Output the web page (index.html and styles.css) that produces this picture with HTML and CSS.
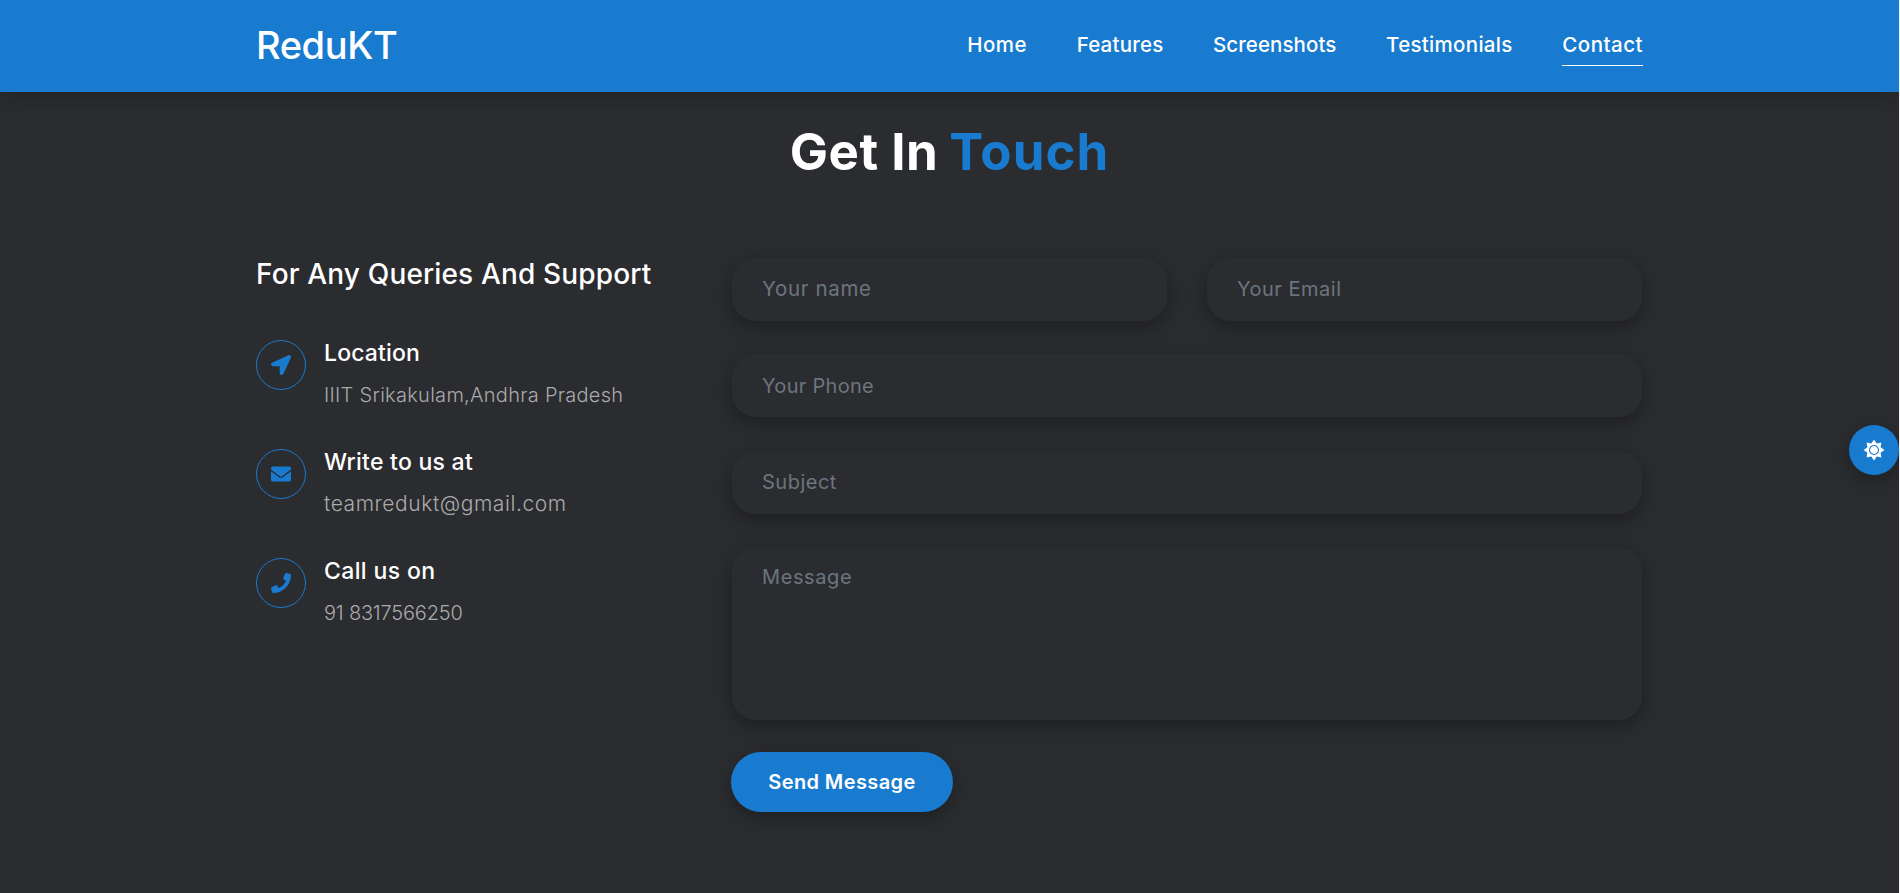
FILE: index.html
```html
<!DOCTYPE html>
<html lang="en">
<head>
<meta charset="utf-8">
<title>ReduKT</title>
<link rel="stylesheet" href="styles.css">
</head>
<body>
<header class="header">
  <div class="container header-row">
    <a class="logo">ReduKT</a>
    <nav class="nav">
      <a class="nav-link home">Home</a>
      <a class="nav-link features">Features</a>
      <a class="nav-link screenshots">Screenshots</a>
      <a class="nav-link testimonials">Testimonials</a>
      <a class="nav-link contact active">Contact</a>
    </nav>
  </div>
</header>
<main class="container">
  <h2 class="title"><span class="title-get">Get In</span><span class="title-touch">Touch</span></h2>
  <div class="columns">
    <section class="info">
      <h3 class="info-title">For Any Queries And Support</h3>
      <div class="item">
        <div class="item-icon"><svg viewBox="0 0 512 512" width="20" height="20"><path d="M444.52 3.52 28.74 195.42c-47.97 22.39-31.98 92.75 19.19 92.75h175.91v175.91c0 51.17 70.36 67.17 92.75 19.19l191.9-415.78c15.99-38.39-25.59-79.97-63.97-63.97z"/></svg></div>
        <div><h4 class="t-loc">Location</h4><p class="p-loc">IIIT Srikakulam,Andhra Pradesh</p></div>
      </div>
      <div class="item">
        <div class="item-icon"><svg viewBox="0 0 512 512" width="20" height="20"><path d="M502.3 190.8c3.9-3.1 9.7-.2 9.7 4.7V400c0 26.5-21.5 48-48 48H48c-26.5 0-48-21.500-48-48V195.600c0-5 5.700-7.800 9.700-4.700 22.400 17.400 52.100 39.500 154.100 113.600 21.100 15.400 56.700 47.800 92.200 47.600 35.700.3 72-32.800 92.300-47.600 102-74.100 131.600-96.300 154-113.700zM256 320c23.200.4 56.600-29.200 73.400-41.400 132.700-96.300 142.800-104.700 173.400-128.700 5.800-4.500 9.200-11.500 9.200-18.900v-19c0-26.500-21.500-48-48-48H48c-26.500 0-48 21.500-48 48v19c0 7.400 3.400 14.300 9.200 18.900 30.600 23.900 40.700 32.400 173.400 128.700 16.800 12.200 50.200 41.800 73.400 41.400z"/></svg></div>
        <div><h4 class="t-mail">Write to us at</h4><p class="p-mail">teamredukt@gmail.com</p></div>
      </div>
      <div class="item">
        <div class="item-icon"><svg viewBox="0 0 512 512" width="20" height="20"><path d="M493.400 24.600l-104-24c-11.300-2.600-22.900 3.300-27.500 13.900l-48 112c-4.200 9.800-1.400 21.300 6.900 28l60.600 49.600c-36 76.700-98.900 140.500-177.200 177.200l-49.600-60.600c-6.800-8.300-18.200-11.100-28-6.900l-112 48C3.900 366.500-2 378.100.6 389.400l24 104C27.100 504.200 36.700 512 48 512c256.100 0 464-207.500 464-464 0-11.200-7.700-20.900-18.600-23.400z"/></svg></div>
        <div><h4 class="t-call">Call us on</h4><p class="p-call">91 8317566250</p></div>
      </div>
    </section>
    <form class="form">
      <input class="field f-name" placeholder="Your name">
      <input class="field f-email" placeholder="Your Email">
      <input class="field wide f-phone" placeholder="Your Phone">
      <input class="field wide f-subject" placeholder="Subject">
      <textarea class="field wide area" placeholder="Message"></textarea>
      <button class="send" type="button">Send Message</button>
    </form>
  </div>
</main>
<button class="theme" type="button" aria-label="Toggle theme">
  <svg viewBox="-12 -12 24 24" width="24" height="24">
    <path d="M0-10.500 2.700-6.600 7.400-7.400 6.600-2.700 10.500 0 6.600 2.700 7.400 7.400 2.700 6.600 0 10.500-2.700 6.600-7.400 7.400-6.600 2.700-10.500 0-6.600-2.700-7.400-7.400-2.700-6.600z" fill="#fff"/>
    <circle r="4.500" fill="#fff" stroke="#187bcf" stroke-width="1.100"/>
  </svg>
</button>
</body>
</html>
```
FILE: styles.css
```css
* { box-sizing: border-box; margin: 0; padding: 0; }
body {
  height: 893px;
  overflow: hidden;
  border-right: 1px solid #f1f1f1;
  background: #2b2c30;
  color: #fff;
  font-family: Inter, "Liberation Sans", sans-serif;
}
.container { width: 1387px; margin: 0 auto; }
.header {
  position: relative;
  height: 92px;
  background: #187bcf;
  box-shadow: 0 6px 20px rgba(0, 0, 0, .2);
}
.header-row { display: flex; align-items: center; justify-content: space-between; height: 90px; }
.logo { font-size: 38px; font-weight: 500; letter-spacing: -.4px; white-space: nowrap; }
.nav { display: flex; gap: 49.6px; }
.nav-link {
  padding: 8px 0;
  border-bottom: 1px solid transparent;
  font-size: 20.5px;
  font-weight: 500;
  line-height: 24px;
  white-space: nowrap;
}
.home, .contact { letter-spacing: .5px; }
.features { letter-spacing: .2px; }
.screenshots { letter-spacing: .08px; }
.testimonials { letter-spacing: .3px; }
.active { border-color: #fff; }
.title {
  display: flex;
  justify-content: center;
  gap: 11px;
  padding-top: 29px;
  font-size: 51px;
  font-weight: 700;
  line-height: 62px;
}
.title-get { letter-spacing: .5px; }
.title-touch { color: #187bcf; letter-spacing: 1px; }
.columns { display: flex; justify-content: space-between; padding-top: 74px; }
.info { width: 416px; }
.info-title {
  padding-top: 1px;
  margin-bottom: 50px;
  font-size: 28px;
  font-weight: 500;
  line-height: 32px;
  letter-spacing: .15px;
  white-space: nowrap;
}
.item { display: flex; gap: 18px; height: 109px; }
.item-icon {
  display: flex;
  align-items: center;
  justify-content: center;
  width: 50px;
  height: 50px;
  border: 1px solid #187bcf;
  border-radius: 50%;
  fill: #187bcf;
}
.item h4 { font-size: 23px; font-weight: 500; line-height: 26px; margin-bottom: 16px; white-space: nowrap; }
.item p { color: #aaa; font-size: 20px; font-weight: 300; line-height: 26px; white-space: nowrap; }
.t-loc { letter-spacing: .15px; }
.t-mail { letter-spacing: .26px; }
.t-call { letter-spacing: .36px; }
.p-loc { letter-spacing: .29px; }
.item .p-mail { font-size: 21px; letter-spacing: .57px; }
.p-call { letter-spacing: -.2px; }
.form {
  display: grid;
  grid-template-columns: 437px 437px;
  column-gap: 38px;
  row-gap: 31.3px;
  align-content: start;
  width: 912px;
}
.field {
  width: 100%;
  height: 65px;
  padding: 0 30px 2px;
  border: 1px solid transparent;
  border-radius: 25px;
  background: #2b2c30;
  background-clip: padding-box;
  box-shadow: 0 6px 20px rgba(0, 0, 0, .3);
  color: #fff;
  font: 400 20px Inter, "Liberation Sans", sans-serif;
  outline: 0;
  resize: none;
}
.field::placeholder { color: #6c757d; opacity: 1; }
.f-name { font-size: 20.5px; letter-spacing: .65px; }
.f-email { letter-spacing: .5px; }
.f-phone { padding-bottom: 0; letter-spacing: .3px; }
.f-subject { padding-bottom: 0; letter-spacing: .5px; }
.wide { grid-column: 1 / 3; }
.area { height: 175px; padding-top: 18px; letter-spacing: .6px; }
.send {
  width: 222px;
  height: 60px;
  border: 0;
  border-radius: 30px;
  background: #187bcf;
  box-shadow: 0 6px 20px rgba(0, 0, 0, .3);
  color: #fff;
  font: 600 20px Inter, "Liberation Sans", sans-serif;
  letter-spacing: .4px;
  white-space: nowrap;
}
.theme {
  position: fixed;
  top: 425px;
  right: 1px;
  display: flex;
  align-items: center;
  justify-content: center;
  width: 50px;
  height: 50px;
  border: 0;
  border-radius: 50%;
  background: #187bcf;
  box-shadow: 0 6px 20px rgba(0, 0, 0, .3);
  clip-path: inset(-40px 0 -40px -40px);
}
```
